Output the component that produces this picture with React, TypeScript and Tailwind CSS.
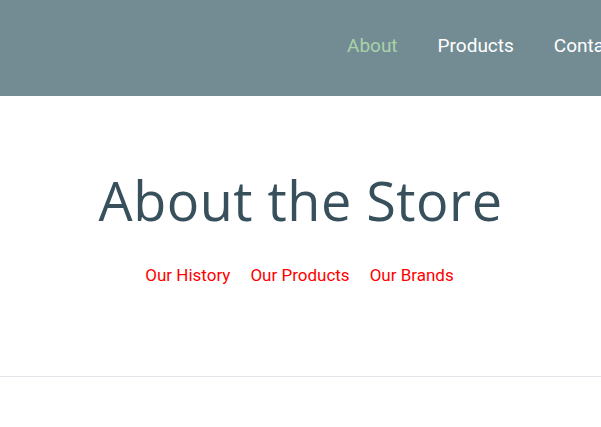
export default function App() {
  return (
    <div className="w-[601px] h-[427px] overflow-hidden bg-white" style={{ fontFamily: "Roboto, 'Liberation Sans', sans-serif" }}>
      <header className="h-[96px] bg-[#738c94] flex items-center overflow-hidden whitespace-nowrap">
        <nav className="flex gap-[40px] pl-[347px] text-[19px] pb-[4px]">
          <a className="text-[#a9d3a8]">About</a>
          <a className="text-white">Products</a>
          <a className="text-white">Contact</a>
        </nav>
      </header>
      <section className="flex flex-col items-center pt-[66px] h-[281px] border-b border-[#e2e6ea]">
        <h1 className="text-[54px] leading-[76px] text-[#37505c] tracking-[0.5px]" style={{ fontFamily: "'Open Sans', sans-serif" }}>About the Store</h1>
        <div className="flex gap-[20px] mt-[25px] text-[17px] text-[#ff0000] pr-[2px]">
          <a>Our History</a>
          <a>Our Products</a>
          <a>Our Brands</a>
        </div>
      </section>
    </div>
  );
}
